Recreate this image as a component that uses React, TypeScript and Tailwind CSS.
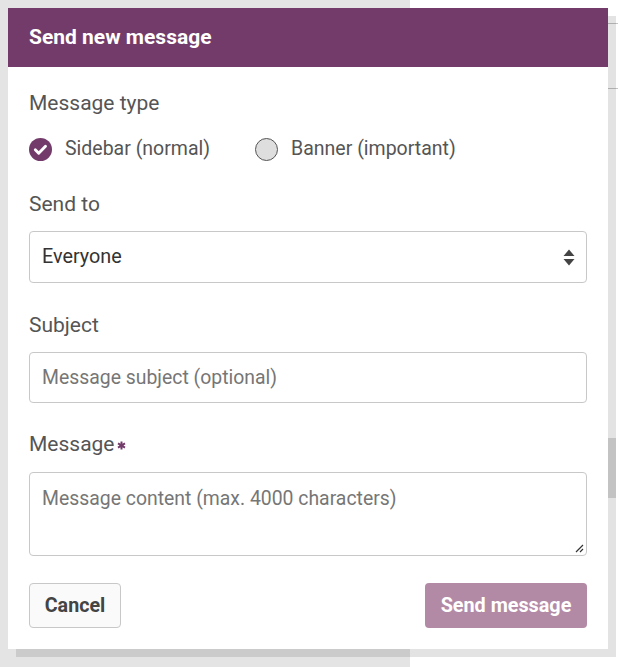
export default function App() {
  return (
    <div className="relative h-[667px] w-[618px] overflow-hidden font-['Roboto',sans-serif]">
      {/* page behind the dialog */}
      <div className="flex h-full">
        <div className="w-[410px] bg-[#e4e4e4]" />
        <div className="relative flex-1 bg-white">
          <div className="h-[24px] border-b border-[#c4c4c4]" />
          <div className="h-[65px] border-b border-[#c4c4c4]" />
          <div className="absolute right-[2px] top-[438px] h-[60px] w-[8px] bg-[#dcdcdc]" />
        </div>
      </div>

      {/* dialog */}
      <div className="absolute left-[8px] top-[8px] w-[600px] bg-white shadow-[8px_8px_0_rgba(0,0,0,0.11)]">
        <div className="flex h-[59px] items-center bg-[#733b6a] px-[21px]">
          <h2 className="text-[21px] font-bold text-white">Send new message</h2>
        </div>

        <div className="px-[21px] pb-[21px] pt-[24px] text-[#555]">
          <p className="text-[21px] leading-[24px]">Message type</p>

          <div className="mt-[22px] flex h-[24px] items-center gap-x-[45px] text-[19.5px]">
            <label className="flex items-center gap-x-[13px]">
              <svg width="23" height="23" viewBox="0 0 23 23">
                <circle cx="11.5" cy="11.5" r="11.5" fill="#733b6a" />
                <path
                  d="M6.3 11.8l3.4 3.4 6.8-7"
                  fill="none"
                  stroke="#fff"
                  strokeWidth="2.9"
                  strokeLinecap="round"
                  strokeLinejoin="round"
                />
              </svg>
              <span>Sidebar (normal)</span>
            </label>
            <label className="flex items-center gap-x-[13px]">
              <span className="h-[23px] w-[23px] rounded-full border border-[#555] bg-[#dedede]" />
              <span>Banner (important)</span>
            </label>
          </div>

          <p className="mt-[31px] text-[21px] leading-[24px]">Send to</p>
          <div className="mt-[15px] flex h-[52px] items-center justify-between rounded-[4px] border border-[#c8c8c8] pl-[12px] pr-[11px] text-[19.8px] text-[#333]">
            <span>Everyone</span>
            <svg width="12" height="17" viewBox="0 0 12 17">
              <path d="M6 0.5L11.5 7H0.5Z" fill="#444" />
              <path d="M6 16.5L11.5 10H0.5Z" fill="#444" />
            </svg>
          </div>

          <p className="mt-[30px] text-[21px] leading-[24px]">Subject</p>
          <div className="mt-[15px] flex h-[51px] items-center rounded-[4px] border border-[#c8c8c8] px-[12px] text-[19.4px] text-[#767676]">
            Message subject (optional)
          </div>

          <p className="mt-[29px] flex items-center text-[21px] leading-[24px]">
            Message
            <svg className="ml-[2px] mt-[3px]" width="9" height="9" viewBox="0 0 10 10">
              <path
                d="M5 0.5V9.5M1.1 2.75L8.9 7.25M1.1 7.25L8.9 2.75"
                stroke="#733b6a"
                strokeWidth="2.2"
              />
            </svg>
          </p>
          <div className="relative mt-[16px] h-[84px] rounded-[4px] border border-[#c8c8c8] px-[12px] pt-[11px] text-[19.4px] text-[#767676]">
            Message content (max. 4000 characters)
            <svg className="absolute bottom-[2px] right-[2px]" width="10" height="10" viewBox="0 0 10 10">
              <path d="M9 2L2 9M9 6L6 9" stroke="#333" strokeWidth="1.2" />
            </svg>
          </div>

          <div className="mt-[27px] flex justify-between">
            <button className="h-[45px] w-[92px] rounded-[4px] border border-[#c8c8c8] bg-[#fafafa] pt-[1px] text-[19.7px] font-bold text-[#444]">
              Cancel
            </button>
            <button className="h-[45px] w-[162px] rounded-[4px] bg-[#b38aa6] pt-[1px] text-[19.8px] font-bold text-white">
              Send message
            </button>
          </div>
        </div>
      </div>
    </div>
  );
}
